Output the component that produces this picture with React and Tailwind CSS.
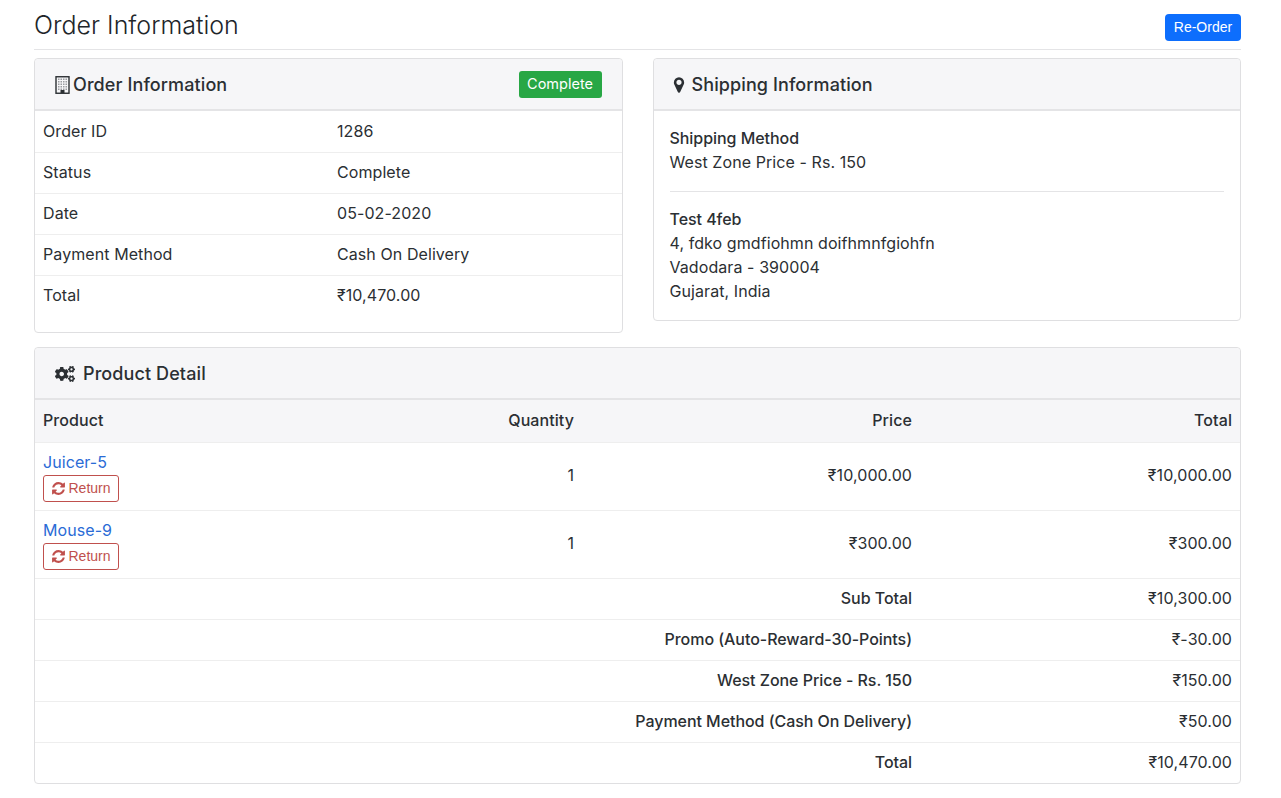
import { FaCogs } from 'react-icons/fa';

const orderRows = [
  ['Order ID', '1286'],
  ['Status', 'Complete'],
  ['Date', '05-02-2020'],
  ['Payment Method', 'Cash On Delivery'],
  ['Total', '₹10,470.00'],
];

const products = [
  { name: 'Juicer-5', qty: 1, price: '₹10,000.00', total: '₹10,000.00' },
  { name: 'Mouse-9', qty: 1, price: '₹300.00', total: '₹300.00' },
];

const totals = [
  ['Sub Total', '₹10,300.00'],
  ['Promo (Auto-Reward-30-Points)', '₹-30.00'],
  ['West Zone Price - Rs. 150', '₹150.00'],
  ['Payment Method (Cash On Delivery)', '₹50.00'],
  ['Total', '₹10,470.00'],
];

function BuildingIcon() {
  const cols = [3.5, 6, 8.5, 11];
  const rows = [3, 5.5, 8, 10.5, 13];
  return (
    <svg width="15" height="18" viewBox="0 0 15 18" className="shrink-0">
      <rect x="1" y="0.75" width="13" height="16.5" fill="none" stroke="currentColor" strokeWidth="1.4" />
      {rows.map((y) => cols.map((x) => <rect key={`${x}-${y}`} x={x - 0.5} y={y - 0.5} width="1.5" height="1.5" fill="#9a9ca0" />))}
      <rect x="5.5" y="14" width="4" height="3" fill="currentColor" />
    </svg>
  );
}

function MarkerIcon() {
  return (
    <svg width="18" height="18" viewBox="0 0 1792 1792" fill="currentColor" className="shrink-0">
      <path d="M1152 640q0-106-75-181t-181-75-181 75-75 181 75 181 181 75 181-75 75-181zm256 0q0 109-33 179l-364 774q-16 33-47.5 52t-67.5 19-67.5-19-46.5-52l-365-774q-33-70-33-179 0-212 150-362t362-150 362 150 150 362z" />
    </svg>
  );
}

function RefreshIcon() {
  return (
    <svg width="15" height="15" viewBox="0 0 1792 1792" fill="currentColor" className="shrink-0">
      <path d="M1639 1056q0 5-1 7-64 268-268 434.5t-478 166.5q-146 0-282.5-55t-243.5-157l-129 129q-19 19-45 19t-45-19-19-45v-448q0-26 19-45t45-19h448q26 0 45 19t19 45-19 45l-137 137q71 66 161 102t187 36q134 0 250-65t186-179q11-17 53-117 8-23 30-23h192q13 0 22.5 9.5t9.5 22.5zm25-800v448q0 26-19 45t-45 19h-448q-26 0-45-19t-19-45 19-45l138-138q-148-137-349-137-134 0-250 65t-186 179q-11 17-53 117-8 23-30 23h-199q-13 0-22.5-9.5t-9.5-22.5v-7q65-268 270-434.5t480-166.5q146 0 284 55.5t245 156.5l130-129q19-19 45-19t45 19 19 45z" />
    </svg>
  );
}

function CardHeader({ children }) {
  return (
    <div className="h-[52px] pt-[1px] bg-[#f6f6f8] border-b-2 border-[#e4e4e6] rounded-t-[4px] flex items-center justify-between pl-5 pr-5 text-[18px] leading-none font-medium text-[#2b2f33] tracking-[0.1px]">
      {children}
    </div>
  );
}

export default function App() {
  return (
    <div className="min-h-[798px] bg-white px-[34px] pr-[40px] text-[16px] tracking-[0.08px] text-[#2b2f33] font-['Inter',sans-serif]">
      {/* Page title */}
      <div className="h-[50px] border-b border-[#e4e4e6] flex items-center justify-between pt-[2px]">
        <h1 className="text-[25px] leading-none font-light text-[#212529] tracking-normal">Order Information</h1>
        <button className="mt-[3px] h-[27px] w-[76px] bg-[#0d6efd] text-white rounded-[4px] text-[14px] tracking-normal font-['Liberation_Sans',sans-serif]">
          Re-Order
        </button>
      </div>

      <div className="grid grid-cols-2 gap-[30px] mt-2 items-start">
        {/* Order info */}
        <div className="border border-[#dfdfe1] rounded-[4px] h-[275px]">
          <CardHeader>
            <span className="flex items-center gap-[3px]">
              <BuildingIcon />
              Order Information
            </span>
            <span className="h-[27px] w-[83px] bg-[#28a745] text-white rounded-[3px] text-[14.5px] font-normal tracking-normal flex items-center justify-center">
              Complete
            </span>
          </CardHeader>
          <table className="w-full">
            <tbody>
              {orderRows.map(([label, value], i) => (
                <tr key={label} className={i < orderRows.length - 1 ? 'h-[41px] border-b border-[#eeeeee]' : 'h-[41px]'}>
                  <td className="w-[294px] pl-2 pb-[1px]">{label}</td>
                  <td className="pl-2 pb-[1px]">{value}</td>
                </tr>
              ))}
            </tbody>
          </table>
        </div>

        {/* Shipping info */}
        <div className="border border-[#dfdfe1] rounded-[4px] h-[263px]">
          <CardHeader>
            <span className="flex items-center gap-[4px] -ml-[4px]">
              <MarkerIcon />
              Shipping Information
            </span>
          </CardHeader>
          <div className="px-4 pt-[15px] leading-6">
            <div className="font-medium tracking-[-0.05px]">Shipping Method</div>
            <div>West Zone Price - Rs. 150</div>
            <div className="border-t border-[#e4e4e6] mt-[17px] pt-[15px]">
              <div className="font-medium tracking-[-0.05px]">Test 4feb</div>
              <div>4, fdko gmdfiohmn doifhmnfgiohfn</div>
              <div>Vadodara - 390004</div>
              <div>Gujarat, India</div>
            </div>
          </div>
        </div>
      </div>

      {/* Product detail */}
      <div className="border border-[#dfdfe1] rounded-[4px] mt-[14px]">
        <CardHeader>
          <span className="flex items-center gap-2">
            <FaCogs size={20} />
            Product Detail
          </span>
        </CardHeader>
        <table className="w-full table-fixed">
          <colgroup>
            <col className="w-[274px]" />
            <col className="w-[273px]" />
            <col className="w-[338px]" />
            <col />
          </colgroup>
          <thead>
            <tr className="h-[42px] bg-[#f6f6f8] border-b border-[#eeeeee] font-medium">
              <td className="pl-2 pb-[2px]">Product</td>
              <td className="pr-2 pb-[2px] text-right">Quantity</td>
              <td className="pr-2 pb-[2px] text-right">Price</td>
              <td className="pr-2 pb-[2px] text-right">Total</td>
            </tr>
          </thead>
          <tbody>
            {products.map((p) => (
              <tr key={p.name} className="h-[68px] border-b border-[#eeeeee]">
                <td className="pl-2 pt-[1px]">
                  <a className="block text-[#2a6bd6] leading-[22px]">{p.name}</a>
                  <button className="mt-[2px] h-[27px] w-[76px] border border-[#c0504d] rounded-[3px] text-[#c0504d] text-[14px] tracking-normal flex items-center justify-center gap-[2px] font-['Liberation_Sans',sans-serif]">
                    <RefreshIcon />
                    Return
                  </button>
                </td>
                <td className="pr-2 pb-[2px] text-right">{p.qty}</td>
                <td className="pr-2 pb-[2px] text-right">{p.price}</td>
                <td className="pr-2 pb-[2px] text-right">{p.total}</td>
              </tr>
            ))}
            {totals.map(([label, value], i) => (
              <tr key={label} className={i < totals.length - 1 ? 'h-[41px] border-b border-[#eeeeee]' : 'h-[41px]'}>
                <td colSpan={3} className="pr-2 pb-[2px] text-right font-medium tracking-[-0.05px]">{label}</td>
                <td className="pr-2 pb-[2px] text-right">{value}</td>
              </tr>
            ))}
          </tbody>
        </table>
      </div>
    </div>
  );
}
